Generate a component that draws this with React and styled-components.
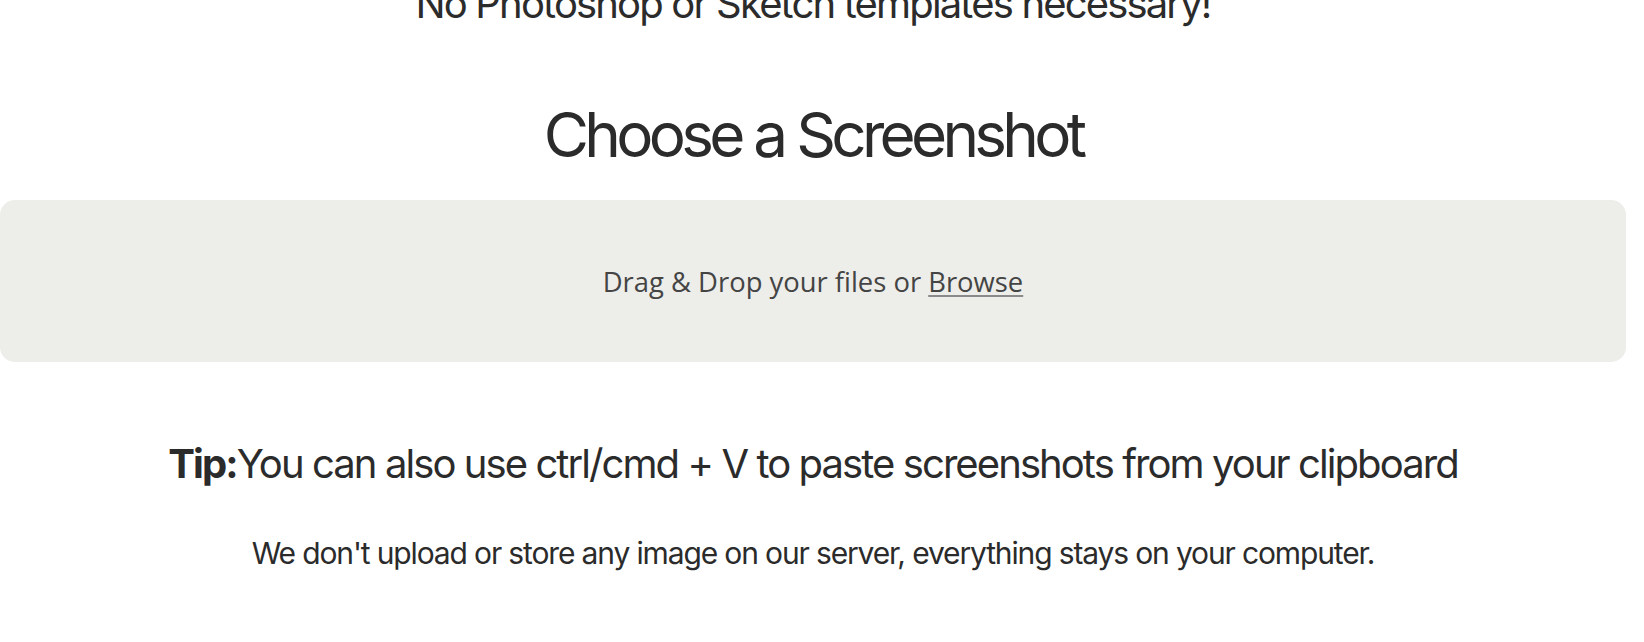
import React from 'react'
import styled, { createGlobalStyle } from 'styled-components'

const GlobalStyle = createGlobalStyle`
    html, body {
        margin: 0;
        padding: 0;
        background: #fff;
        overflow: hidden;
    }
`

const Page = styled.main`
    width: 1626px;
    display: flex;
    flex-direction: column;
    align-items: center;
    font-family: Inter, "Liberation Sans", sans-serif;
    color: #2b2b2b;
    text-align: center;
`

// the page is scrolled a little, so the tagline is cut at the top
const Tagline = styled.p`
    margin: -20px 0 0;
    font-size: 40px;
    line-height: 48px;
    letter-spacing: -0.046em;
`

const Title = styled.h1`
    margin: 76px 0 0;
    font-size: 62px;
    line-height: 62px;
    font-weight: 400;
    letter-spacing: -0.076em;
`

const DropZone = styled.div`
    margin-top: 34px;
    width: 100%;
    height: 162px;
    border-radius: 15px;
    background: #ededea;
    display: flex;
    align-items: center;
    justify-content: center;
`

const DropText = styled.span`
    font-family: "Open Sans", "Liberation Sans", sans-serif;
    font-size: 27.4px;
    color: #444;

    a {
        color: inherit;
        text-decoration: underline;
        text-decoration-color: #8a8a8a;
        text-decoration-thickness: 2px;
        text-underline-offset: 3px;
    }
`

const Tip = styled.p`
    margin: 78px 0 0;
    font-size: 40px;
    line-height: 48px;
    letter-spacing: -0.048em;

    strong {
        font-weight: 700;
    }
`

const Note = styled.p`
    margin: 47px 0 0;
    font-size: 30px;
    line-height: 36px;
    letter-spacing: -0.038em;
`

const App = () => {
    return (
        <>
            <GlobalStyle />
            <Page>
                <Tagline>No Photoshop or Sketch templates necessary!</Tagline>
                <Title>Choose a Screenshot</Title>
                <DropZone>
                    <DropText>Drag &amp; Drop your files or <a href="#">Browse</a></DropText>
                </DropZone>
                <Tip><strong>Tip:</strong>You can also use ctrl/cmd + V to paste screenshots from your clipboard</Tip>
                <Note>We don't upload or store any image on our server, everything stays on your computer.</Note>
            </Page>
        </>
    )
}

export default App
